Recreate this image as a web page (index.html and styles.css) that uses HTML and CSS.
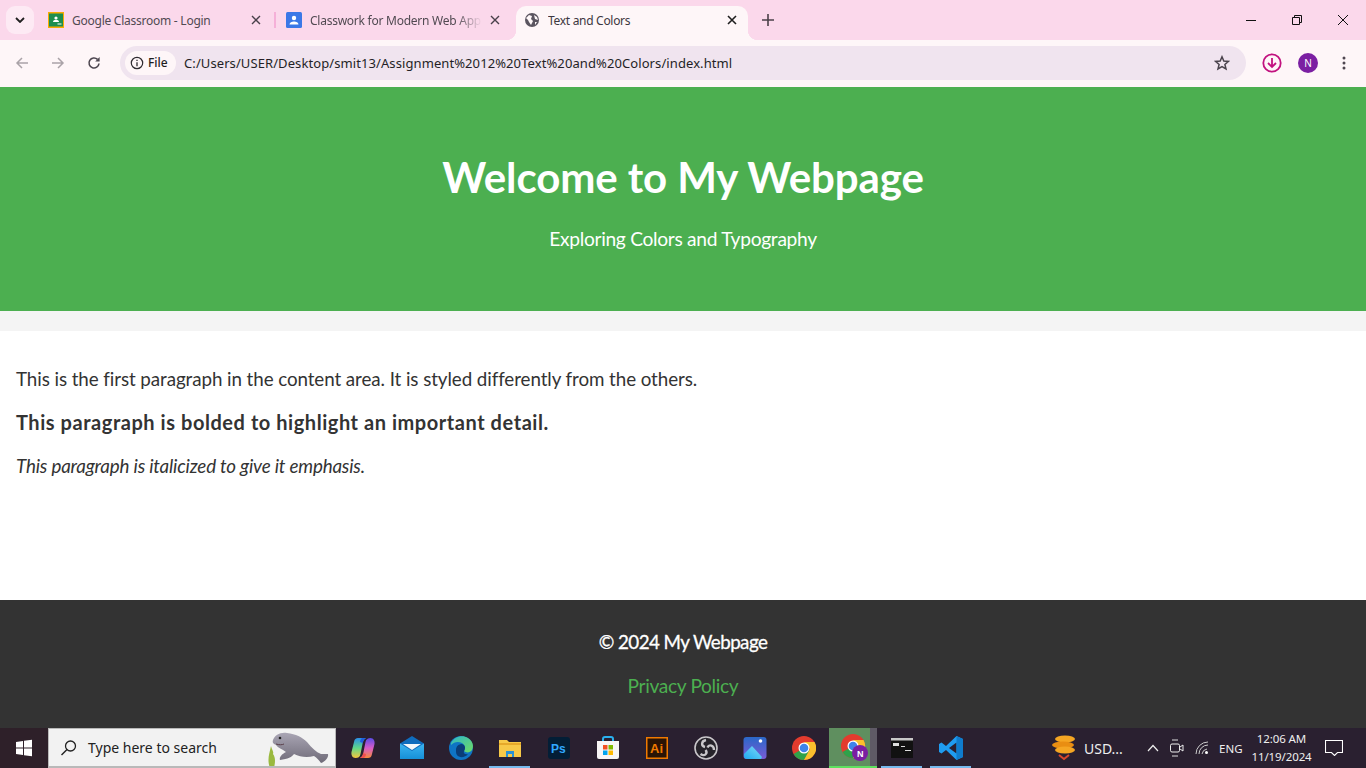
FILE: index.html
```html
<!DOCTYPE html>
<html lang="en">
<head>
<meta charset="utf-8">
<title>Text and Colors</title>
<link rel="stylesheet" href="styles.css">
</head>
<body>
<div class="browser">
  <div class="tabstrip">
    <div class="tabsearch"><svg width="10" height="6" viewBox="0 0 10 6"><path d="M1 1l4 4 4-4" fill="none" stroke="#1f1f1f" stroke-width="1.8"/></svg></div>
    <div class="tab tab-one">
      <svg class="favicon" width="16" height="16" viewBox="0 0 16 16"><rect width="16" height="16" fill="#f9ab00"/><rect x="1" y="1.5" width="14" height="13" fill="#1e8e4e"/><circle cx="8" cy="6" r="1.6" fill="#fff"/><path d="M5 10c0-3 6-3 6 0z" fill="#fff"/><rect x="9.5" y="11.5" width="4" height="1" fill="#fff"/></svg>
      <span class="tab-title">Google Classroom - Login</span>
      <svg class="tabclose" width="10" height="10" viewBox="0 0 10 10"><path d="M1 1l8 8M9 1l-8 8" stroke="#48404a" stroke-width="1.4"/></svg>
    </div>
    <div class="tabsep"></div>
    <div class="tab tab-two">
      <svg class="favicon" width="16" height="16" viewBox="0 0 16 16"><rect width="16" height="16" rx="1.5" fill="#3b78e7"/><circle cx="8" cy="6" r="2.2" fill="#fff"/><path d="M3.5 12.5c0-4 9-4 9 0z" fill="#fff"/></svg>
      <span class="tab-title tab-fade">Classwork for Modern Web App</span>
      <svg class="tabclose" width="10" height="10" viewBox="0 0 10 10"><path d="M1 1l8 8M9 1l-8 8" stroke="#48404a" stroke-width="1.4"/></svg>
    </div>
    <div class="tab tab-active">
      <svg class="favicon" width="16" height="16" viewBox="0 0 16 16"><circle cx="8" cy="8" r="7" fill="#5b5560"/><path d="M2 6l3-3 3 1-1 3 2 2-2 4-2-3-1-2zM10 3l3 2 1 3-3-1zM11 10l2 0-2 3z" fill="#fff8f9"/></svg>
      <span class="tab-title tab-title-active">Text and Colors</span>
      <svg class="tabclose tabclose-active" width="10" height="10" viewBox="0 0 10 10"><path d="M1 1l8 8M9 1l-8 8" stroke="#1f1f1f" stroke-width="1.6"/></svg>
    </div>
    <svg class="newtab" width="12" height="12" viewBox="0 0 12 12"><path d="M6 0v12M0 6h12" stroke="#4b4049" stroke-width="1.6"/></svg>
    <div class="winctrls">
      <svg width="10" height="10" viewBox="0 0 10 10"><path d="M0 5.5h10" stroke="#111" stroke-width="1"/></svg>
      <svg width="10" height="10" viewBox="0 0 10 10"><path d="M.5 2.5h7v7h-7zM2.5 2.5v-2h7v7h-2" fill="none" stroke="#111" stroke-width="1"/></svg>
      <svg width="10" height="10" viewBox="0 0 10 10"><path d="M0 0l10 10M10 0L0 10" stroke="#111" stroke-width="1"/></svg>
    </div>
  </div>
  <div class="toolbar">
    <svg class="navicon" width="14" height="14" viewBox="0 0 14 14"><path d="M13 7H2M7 2L2 7l5 5" fill="none" stroke="#aaa3a8" stroke-width="1.5"/></svg>
    <svg class="navicon" width="14" height="14" viewBox="0 0 14 14"><path d="M1 7h11M7 2l5 5-5 5" fill="none" stroke="#aaa3a8" stroke-width="1.5"/></svg>
    <svg class="navicon" width="14" height="14" viewBox="0 0 14 14"><path d="M12 7.5A5 5 0 1 1 10.5 3.4" fill="none" stroke="#4d4650" stroke-width="1.6"/><path d="M12.6 1v4.4H8.2z" fill="#4d4650"/></svg>
    <div class="omnibox">
      <div class="chip">
        <svg width="14" height="14" viewBox="0 0 14 14"><circle cx="7" cy="7" r="5.7" fill="none" stroke="#2e2a30" stroke-width="1.2"/><path d="M7 6.2v4M7 3.8v1.3" stroke="#2e2a30" stroke-width="1.3"/></svg>
        <span class="chip-label">File</span>
      </div>
      <span class="url">C:/Users/USER/Desktop/smit13/Assignment%2012%20Text%20and%20Colors/index.html</span>
      <svg class="star" width="16" height="16" viewBox="0 0 16 16"><path d="M8 1.8l1.8 4.2 4.6.4-3.5 3 1.1 4.5L8 11.5l-4 2.4 1.1-4.5-3.5-3 4.6-.4z" fill="none" stroke="#4a434c" stroke-width="1.5"/></svg>
    </div>
    <svg class="download" width="20" height="20" viewBox="0 0 20 20"><circle cx="10" cy="10" r="8.7" fill="none" stroke="#c2127f" stroke-width="1.8"/><path d="M10 5v9M6 10l4 4 4-4" fill="none" stroke="#c2127f" stroke-width="1.8"/></svg>
    <div class="avatar">N</div>
    <svg class="kebab" width="4" height="14" viewBox="0 0 4 14"><circle cx="2" cy="2" r="1.5" fill="#4f4650"/><circle cx="2" cy="7" r="1.5" fill="#4f4650"/><circle cx="2" cy="12" r="1.5" fill="#4f4650"/></svg>
  </div>
</div>

<main class="page">
  <header class="hero">
    <h1>Welcome to My Webpage</h1>
    <p>Exploring Colors and Typography</p>
  </header>
  <section class="content">
    <p class="regular">This is the first paragraph in the content area. It is styled differently from the others.</p>
    <p class="bold">This paragraph is bolded to highlight an important detail.</p>
    <p class="italic">This paragraph is italicized to give it emphasis.</p>
  </section>
  <footer class="foot">
    <p>© 2024 My Webpage</p>
    <a href="#">Privacy Policy</a>
  </footer>
</main>

<div class="taskbar">
  <div class="start"><svg width="18" height="18" viewBox="0 0 18 18"><path d="M1 3l7-1v6.500H1zM9 1.800L17 .7v7.800H9zM1 9.500h7V16l-7-1zM9 9.500h8v7.800l-8-1.100z" fill="#fff"/></svg></div>
  <div class="search">
    <svg width="18" height="18" viewBox="0 0 18 18"><circle cx="10.500" cy="7" r="5" fill="none" stroke="#222" stroke-width="1.300"/><path d="M7 10.500L1.500 16" stroke="#222" stroke-width="1.400"/></svg>
    <span class="search-text">Type here to search</span>
    <svg class="manatee" width="70" height="40" viewBox="0 0 70 40"><defs><linearGradient id="manateeGrad" x1="0" y1="0" x2="0" y2="1"><stop offset="0" stop-color="#a9a5b4"/><stop offset="1" stop-color="#6f6b78"/></linearGradient></defs><path d="M10 40C7 32 9 27 11 18c1 4 3 6 2 8 3 4 2 9 1 14z" fill="#9ab93f"/><path d="M13 12C15 7 20 4 27 5c9 1 15 4 20 9 5 6 9 10 14 12h7c1 3-3 8-7 9-2-3-4-5-7-7-7 2-14 1-20-2-2 3-6 5-14 6-1-3 2-6 6-8-4-3-8-4-10-7-2-1-4-2-3-5z" fill="url(#manateeGrad)"/><circle cx="20" cy="10" r="1.300" fill="#222"/><path d="M16 16c3 1 6 1 8 0" fill="none" stroke="#5a3f4a" stroke-width="1"/></svg>
  </div>
  <div class="apps">
    <div class="app"><svg width="24" height="24" viewBox="0 0 24 24"><defs><linearGradient id="copA" x1="0" y1="0" x2="0" y2="1"><stop offset="0" stop-color="#2a8fe8"/><stop offset=".5" stop-color="#5fd88a"/><stop offset="1" stop-color="#f7c63c"/></linearGradient><linearGradient id="copB" x1="0" y1="0" x2="0" y2="1"><stop offset="0" stop-color="#5a4be6"/><stop offset=".5" stop-color="#d85cc8"/><stop offset="1" stop-color="#f58a3c"/></linearGradient></defs><path d="M17 22H9c2-1 3-3 3.500-6l2-10C15 3 17 2 19.500 2c3 0 4.500 3 4 6l-2.500 10c-.5 3-2 4-4 4z" fill="url(#copB)"/><path d="M7 2h8c-2 1-3 3-3.500 6l-2 10C9 21 7 22 4.500 22c-3 0-4.500-3-4-6L3 6c.5-3 2-4 4-4z" fill="url(#copA)"/><path d="M11 2h4c-2 1-3 3-3 5l-3-1c0-2 1-3 2-4z" fill="#1f5fe0"/><path d="M13 22H9c2-1 3-3 3-5l3 1c0 2-1 3-2 4z" fill="#ef4f4f"/></svg></div>
    <div class="app"><svg width="24" height="24" viewBox="0 0 24 24"><defs><linearGradient id="mailGrad" x1="0" y1="0" x2="0" y2="1"><stop offset="0" stop-color="#3cb4f0"/><stop offset="1" stop-color="#1690d8"/></linearGradient></defs><path d="M0 7.500L12 0l12 7.500V23H0z" fill="#0f6cbd"/><path d="M3 8h18l-9 6z" fill="#f4f8fb"/><path d="M0 7.500l12 7.500 12-7.500V23H0z" fill="url(#mailGrad)"/></svg></div>
    <div class="app"><svg width="24" height="24" viewBox="0 0 24 24"><defs><linearGradient id="edgeGrad" x1="0" y1="0" x2="1" y2="1"><stop offset="0" stop-color="#2fb5c8"/><stop offset="1" stop-color="#6fdc62"/></linearGradient></defs><circle cx="12" cy="12" r="12" fill="#0f74c4"/><path d="M2 7C5 1 13-2 19 2c5 3 6 8 4 12-2 3-6 3-8 1 2-3 1-6-2-8C9 5 5 6 2 9z" fill="url(#edgeGrad)"/><path d="M7 14c0-4 3-6 6-6 3 1 4 4 2 7-1 2 1 4 4 3-3 4-9 4-11 1-1-1-1-3-1-5z" fill="#0a3d78"/></svg></div>
    <div class="app app-line"><svg width="22" height="20" viewBox="0 0 22 20"><path d="M0 2h8l2 2h12v15H0z" fill="#f7c948"/><path d="M0 5h22v2H0z" fill="#e6a92a"/><path d="M7 19v-6h8v6h-2v-3H9v3z" fill="#2a92d4"/></svg></div>
    <div class="app"><svg width="22" height="22" viewBox="0 0 22 22"><rect width="22" height="22" rx="3" fill="#031e36"/><text x="3" y="16" class="ps">Ps</text></svg></div>
    <div class="app"><svg width="24" height="24" viewBox="0 0 24 24"><path d="M7 6V3a2 2 0 0 1 2-2h6a2 2 0 0 1 2 2v3" fill="none" stroke="#2ab0ef" stroke-width="2"/><path d="M1 5h22v16a2 2 0 0 1-2 2H3a2 2 0 0 1-2-2z" fill="#f7f5f5"/><path d="M7 9h4.500v4.500H7z" fill="#f25022"/><path d="M12.500 9H17v4.500h-4.500z" fill="#7fba00"/><path d="M7 14.500h4.500V19H7z" fill="#00a4ef"/><path d="M12.500 14.500H17V19h-4.500z" fill="#ffb900"/></svg></div>
    <div class="app"><svg width="22" height="22" viewBox="0 0 22 22"><rect x=".750" y=".750" width="20.500" height="20.500" fill="#2a1405" stroke="#f07a00" stroke-width="1.500"/><text x="4" y="16" class="ai">Ai</text></svg></div>
    <div class="app"><svg width="24" height="24" viewBox="0 0 24 24"><circle cx="12" cy="12" r="11" fill="#26232a" stroke="#c9c7ca" stroke-width="1.600"/><path d="M11 11C7 10 7 5 12 4M13.500 11.500C15 8 20 9 20 14M11.500 14C14 17 11 21 6.500 18" fill="none" stroke="#c9c7ca" stroke-width="2.400"/></svg></div>
    <div class="app"><svg width="24" height="24" viewBox="0 0 24 24"><defs><linearGradient id="photoGrad" x1="0" y1="0" x2="0" y2="1"><stop offset="0" stop-color="#2a68c8"/><stop offset="1" stop-color="#7a5cd6"/></linearGradient><linearGradient id="peakGrad" x1="0" y1="1" x2="1" y2="0"><stop offset="0" stop-color="#1faaf0"/><stop offset="1" stop-color="#7fdcf7"/></linearGradient></defs><rect x=".500" y="1" width="23" height="22" rx="3" fill="url(#photoGrad)"/><circle cx="17.500" cy="5" r="1.800" fill="#fff"/><path d="M1 18l8-8 10 11-1 2H4a3 3 0 0 1-3-3z" fill="url(#peakGrad)"/></svg></div>
    <div class="app"><svg width="24" height="24" viewBox="0 0 24 24"><circle cx="12" cy="12" r="12" fill="#e33b2e"/><path d="M12 12L1.600 18A12 12 0 0 0 12 24l6-10z" fill="#2fa24a"/><path d="M12 6h10.500A12 12 0 0 1 12 24l6-11z" fill="#fbc02d"/><circle cx="12" cy="12" r="5.500" fill="#fff"/><circle cx="12" cy="12" r="4.300" fill="#3f83ea"/></svg></div>
    <div class="app app-active"><svg class="chrome-n" width="28" height="28" viewBox="0 0 28 28"><circle cx="12" cy="12" r="12" fill="#e33b2e"/><path d="M12 12L1.600 18A12 12 0 0 0 12 24l6-10z" fill="#2fa24a"/><path d="M12 6h10.500A12 12 0 0 1 12 24l6-11z" fill="#fbc02d"/><circle cx="12" cy="12" r="5.500" fill="#fff"/><circle cx="12" cy="12" r="4.300" fill="#3f83ea"/><circle cx="19" cy="19" r="8" fill="#7b1fa2"/><text x="16" y="22.500" class="badge">N</text></svg></div>
    <div class="app app-line"><svg width="22" height="20" viewBox="0 0 22 20"><rect width="22" height="20" fill="#111"/><rect y="0" width="22" height="2.500" fill="#c8c8c8"/><path d="M2 5h6v3H2zM10 8h4v1h-4zM14 12h6v1h-6z" fill="#ddd"/></svg></div>
    <div class="app app-line"><svg width="24" height="24" viewBox="0 0 24 24"><path d="M17.500 0L24 3v18l-6.500 3L7 14l-4.500 3.500L0 16V8l2.500-1.500L7 10z" fill="#1f9cf0"/><path d="M17.500 6.500L10 12l7.500 5.500z" fill="#2a2030"/><path d="M17.500 0L24 3v18l-6.500 3z" fill="#0f7ccc"/></svg></div>
  </div>
  <div class="tray">
    <svg class="coin" width="24" height="26" viewBox="0 0 24 26"><ellipse cx="13" cy="4" rx="10" ry="3.500" fill="#f5a623"/><ellipse cx="11" cy="10" rx="11" ry="3.500" fill="#e98e12"/><ellipse cx="13" cy="15" rx="10" ry="3.500" fill="#f5a623"/><path d="M7 20l5 4 5-4" fill="none" stroke="#d9472b" stroke-width="2"/></svg>
    <span class="tray-text usd">USD...</span>
    <svg class="tray-icon chevron" width="12" height="8" viewBox="0 0 12 8"><path d="M1 7l5-5.500L11 7" fill="none" stroke="#eee" stroke-width="1.200"/></svg>
    <svg class="tray-icon" width="14" height="18" viewBox="0 0 14 18"><path d="M2 1h6M2 17h6" stroke="#ddd"/><rect x=".500" y="5" width="9" height="8" rx="1.500" fill="none" stroke="#eee"/><path d="M10 8l3-2v6l-3-2" fill="none" stroke="#eee"/></svg>
    <svg class="tray-icon wifi" width="14" height="14" viewBox="0 0 14 14"><path d="M1 13A12 12 0 0 1 13 1M4 13a9 9 0 0 1 9-9M7 13a6 6 0 0 1 5-5" fill="none" stroke="#ccc"/><circle cx="11.500" cy="11.500" r="1.500" fill="#fff"/></svg>
    <span class="tray-text lang">ENG</span>
    <div class="clock"><span>12:06 AM</span><span>11/19/2024</span></div>
    <svg class="notify" width="18" height="16" viewBox="0 0 18 16"><path d="M.5.500h17v12h-5l-3 3-3-3h-6z" fill="none" stroke="#fff" stroke-width="1.100"/></svg>
  </div>
</div>
</body>
</html>
```
FILE: styles.css
```css
* { box-sizing: border-box; }
html, body { margin: 0; height: 100%; }
body {
  width: 1366px;
  height: 768px;
  overflow: hidden;
  display: flex;
  flex-direction: column;
  font-family: "Lato", "Open Sans", sans-serif;
}

/* browser chrome */
.browser { flex: none; height: 87px; background: #fef6f8; font-family: "Noto Sans", "Open Sans", sans-serif; }
.tabstrip { height: 40px; background: #fbd8eb; display: flex; align-items: flex-end; position: relative; }
.tabsearch {
  width: 28px; height: 28px; margin: 0 0 6px 6px; border-radius: 9px; background: #fdeaf4;
  display: flex; align-items: center; justify-content: center; flex: none;
}
.tab { height: 34px; display: flex; align-items: center; flex: none; padding-bottom: 6px; }
.tab-one { width: 240px; padding-left: 14px; }
.tab-two { width: 237px; padding-left: 10px; }
.tabsep { width: 2px; height: 16px; background: #f5b0d8; margin-bottom: 12px; flex: none; }
.tab-active { width: 232px; background: #fef6f8; border-radius: 10px 10px 0 0; padding-left: 8px; margin-left: 3px; position: relative; }
.tab-active::before, .tab-active::after { content: ""; position: absolute; bottom: 0; width: 10px; height: 10px; }
.tab-active::before { left: -10px; background: radial-gradient(circle at 0 0, transparent 10px, #fef6f8 10.5px); }
.tab-active::after { right: -10px; background: radial-gradient(circle at 100% 0, transparent 10px, #fef6f8 10.5px); }
.favicon { flex: none; }
.tab-title {
  margin: 2px 0 0 8px; font: 12px/16px "Noto Sans", sans-serif; letter-spacing: -.25px; color: #514a52; white-space: nowrap;
  overflow: hidden; flex: 1; min-width: 0;
}
.tab-fade { -webkit-mask-image: linear-gradient(90deg, #000 85%, transparent 100%); mask-image: linear-gradient(90deg, #000 85%, transparent 100%); }
.tab-title-active { color: #3d373f; letter-spacing: -.3px; }
.tabclose { flex: none; margin-right: 13px; margin-left: 8px; }
.tabclose-active { margin-right: 11px; }
.newtab { flex: none; margin: 0 0 14px 14px; }
.winctrls { margin-left: auto; display: flex; align-self: stretch; align-items: center; gap: 36px; padding-right: 18px; margin-bottom: 0; }

.toolbar { height: 46px; display: flex; align-items: center; padding: 0 0 0 15px; border-bottom: 0; }
.navicon { flex: none; margin-right: 22px; }
.omnibox {
  width: 1126px; height: 34px; margin-left: -3px; background: #f0e4ef; border-radius: 17px;
  display: flex; align-items: center; padding: 0 16px 0 5px; flex: none;
}
.chip { height: 24px; width: 51px; padding-left: 5px; border-radius: 12px; background: #fef6f8; display: flex; align-items: center; gap: 4px; flex: none; }
.chip-label { font: 500 12px/16px "Noto Sans", sans-serif; color: #1f1f1f; }
.url { margin-left: 8px; font: 13px/18px "Noto Sans", sans-serif; letter-spacing: .09px; color: #241f26; white-space: nowrap; flex: 1; }
.star { flex: none; }
.download { flex: none; margin-left: 16px; }
.avatar {
  width: 20px; height: 20px; margin-left: 16px; border-radius: 50%; background: #7b1fa2; color: #fff;
  font: 10px/20px "Noto Sans", sans-serif; text-align: center; flex: none;
}
.kebab { flex: none; margin-left: 24px; }

/* page */
.page { flex: 1; min-height: 0; display: flex; flex-direction: column; background: #f4f4f4; color: #333; }
.hero { flex: none; height: 224px; background: #4caf50; color: #fff; text-align: center; padding-top: 64px; }
.hero h1 { margin: 0; font-size: 42px; line-height: 52px; font-weight: 700; letter-spacing: -.1px; }
.hero p { margin: 23px 0 0; font-size: 19.200px; line-height: 26px; letter-spacing: -.3px; }
.content { flex: 1; margin-top: 20px; background: #fff; padding: 36px 16px 0; font-size: 18.800px; line-height: 24px; }
.content p { margin: 0 0 20px; }
.content .regular { letter-spacing: -.08px; margin-bottom: 19px; }
.bold { font-weight: 700; font-size: 20px; letter-spacing: .55px; }
.italic { font-style: italic; letter-spacing: -.18px; }
.foot { flex: none; height: 128px; background: #333; color: #fff; text-align: center; padding-top: 29px; line-height: 26px; }
.foot p { margin: 0 0 18px; font-size: 18.800px; letter-spacing: -.55px; -webkit-text-stroke: .3px #fff; }
.foot a { color: #4caf50; text-decoration: none; font-size: 19.200px; letter-spacing: -.35px; }

/* taskbar */
.taskbar {
  flex: none; height: 40px; background: #2a2030; display: flex; align-items: stretch; color: #fff;
  font-family: "Noto Sans", "Open Sans", sans-serif;
}
.start { width: 48px; display: flex; align-items: center; justify-content: center; flex: none; background: #2e2029; }
.search {
  width: 288px; background: #f2f2f2; border: 1px solid #b9b9b9; border-bottom-width: 2px; display: flex; align-items: center;
  padding-left: 11px; flex: none; position: relative; overflow: hidden;
}
.search-text { margin-left: 10px; font-size: 14px; color: #222; }
.manatee { position: absolute; right: 5px; top: -1px; }
.apps { display: flex; flex: none; margin-left: 2px; }
.app { width: 49px; display: flex; align-items: center; justify-content: center; position: relative; flex: none; }
.app-line::after { content: ""; position: absolute; left: 4px; right: 4px; bottom: 0; height: 2px; background: #76b9ed; }
.app-active { background: linear-gradient(90deg, transparent 0 1px, #5f8f5f 1px 42px, #5f5a66 42px); }
.app-active::after { content: ""; position: absolute; left: 1px; right: 0; bottom: 0; height: 2px; background: #5fe05f; }
.chrome-n { margin-left: 4px; }
.ps { font: 700 12px "Liberation Sans", sans-serif; fill: #31a8ff; }
.ai { font: 700 13px "Liberation Sans", sans-serif; fill: #f07a00; }
.badge { font: 700 9px "Liberation Sans", sans-serif; fill: #fff; }
.tray { flex: 1; display: flex; align-items: center; padding-left: 77px; }
.coin { flex: none; }
.tray-text { font-size: 13px; color: #eee; }
.usd { margin-left: 8px; width: 63px; font-size: 14px; }
.chevron { margin-right: 11px; }
.tray-icon { flex: none; }
.wifi { margin-left: 11px; }
.lang { margin-left: 10px; font-size: 11.500px; }
.clock { display: flex; flex-direction: column; align-items: center; margin-left: 9px; font-size: 11.500px; line-height: 18px; color: #eee; width: 60px; letter-spacing: -.1px; }
.notify { flex: none; margin-left: 13px; }
```
